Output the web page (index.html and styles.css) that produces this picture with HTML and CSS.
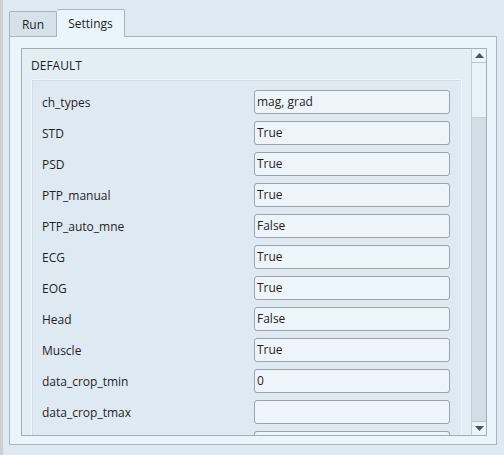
FILE: index.html
```html
<!DOCTYPE html>
<html>
<head>
<meta charset="utf-8">
<link rel="stylesheet" href="styles.css">
</head>
<body>
<div class="window">
  <div class="tabbar">
    <div class="tab">Run</div>
    <div class="tab active">Settings</div>
  </div>
  <div class="pane">
    <div class="scrollarea">
      <div class="content">
        <div class="group-title">DEFAULT</div>
        <div class="group">
          <div class="row"><span class="label">ch_types</span><div class="input">mag, grad</div></div>
          <div class="row"><span class="label">STD</span><div class="input">True</div></div>
          <div class="row"><span class="label">PSD</span><div class="input">True</div></div>
          <div class="row"><span class="label">PTP_manual</span><div class="input">True</div></div>
          <div class="row"><span class="label">PTP_auto_mne</span><div class="input">False</div></div>
          <div class="row"><span class="label">ECG</span><div class="input">True</div></div>
          <div class="row"><span class="label">EOG</span><div class="input">True</div></div>
          <div class="row"><span class="label">Head</span><div class="input">False</div></div>
          <div class="row"><span class="label">Muscle</span><div class="input">True</div></div>
          <div class="row"><span class="label">data_crop_tmin</span><div class="input">0</div></div>
          <div class="row"><span class="label">data_crop_tmax</span><div class="input"></div></div>
          <div class="row"><span class="label"></span><div class="input"></div></div>
        </div>
      </div>
      <div class="scrollbar">
        <div class="sb-btn"><svg width="9" height="5" viewBox="0 0 9 5"><path d="M0 5 L4.5 0 L9 5 Z" fill="#4a5258"/></svg></div>
        <div class="sb-thumb"></div>
        <div class="sb-track"></div>
        <div class="sb-btn"><svg width="9" height="5" viewBox="0 0 9 5"><path d="M0 0 L4.5 5 L9 0 Z" fill="#4a5258"/></svg></div>
      </div>
    </div>
  </div>
</div>
</body>
</html>
```

FILE: styles.css
```css
html, body {
  margin: 0;
  padding: 0;
}
body {
  width: 504px;
  height: 455px;
  overflow: hidden;
  background: #dfe9f1;
  font-family: "Open Sans", "Noto Sans", sans-serif;
  font-size: 12px;
  color: #1f1f1f;
}
.window {
  height: 455px;
  border-left: 3px solid #cdd0d2;
  padding: 8px 7px 0 6px;
  box-sizing: border-box;
}
.tabbar {
  display: flex;
  align-items: flex-end;
  height: 28px;
  position: relative;
  z-index: 1;
}
.tab {
  height: 24px;
  width: 46px;
  box-sizing: content-box;
  border: 1px solid #a9b4bc;
  border-bottom: none;
  border-radius: 2px 2px 0 0;
  background: #d6e1e9;
  display: flex;
  align-items: center;
  justify-content: center;
}
.tab.active {
  width: 67px;
  height: 27px;
  margin-bottom: -1px;
  background: #e9f4fb;
  border-left: none;
}
.pane {
  height: 409px;
  background: #e9f4fb;
  border: 1px solid #a9b4bc;
  box-sizing: border-box;
  padding: 11px 9px 9px 11px;
}
.scrollarea {
  height: 388px;
  border: 1px solid #a3adb5;
  box-sizing: border-box;
  background: #e3edf4;
  display: flex;
  overflow: hidden;
}
.content {
  flex: 1;
  overflow: hidden;
  padding: 0 9px;
}
.group-title {
  height: 30px;
  line-height: 16px;
  padding-top: 9px;
  box-sizing: border-box;
}
.group {
  border-left: 1px solid #eef6fb;
  border-top: 1px solid #eef6fb;
  border-right: 1px solid #eef6fb;
  box-shadow: inset 1px 1px 0 #d3dde5;
  background: #dfe9f1;
  padding: 10px 11px 0 10px;
}
.row {
  display: flex;
  align-items: center;
  justify-content: space-between;
  height: 24px;
  margin-bottom: 7px;
}
.input {
  width: 196px;
  height: 24px;
  box-sizing: border-box;
  border: 1px solid #9aa4ab;
  border-radius: 3px;
  background: #eef5fa;
  padding-left: 2px;
  line-height: 22px;
}
.scrollbar {
  width: 14px;
  border-left: 1px solid #c4ced6;
  display: flex;
  flex-direction: column;
  background: #d1dde5;
}
.sb-btn {
  height: 13px;
  background: #eaf3f9;
  border-bottom: 1px solid #b9c3ca;
  display: flex;
  align-items: center;
  justify-content: center;
}
.sb-btn:last-child {
  border-bottom: none;
  border-top: 1px solid #b9c3ca;
}
.sb-thumb {
  height: 54px;
  background: #e8f2f8;
  border-bottom: 1px solid #c8d2da;
}
.sb-track {
  flex: 1;
  background: #d2dee6;
}
```
